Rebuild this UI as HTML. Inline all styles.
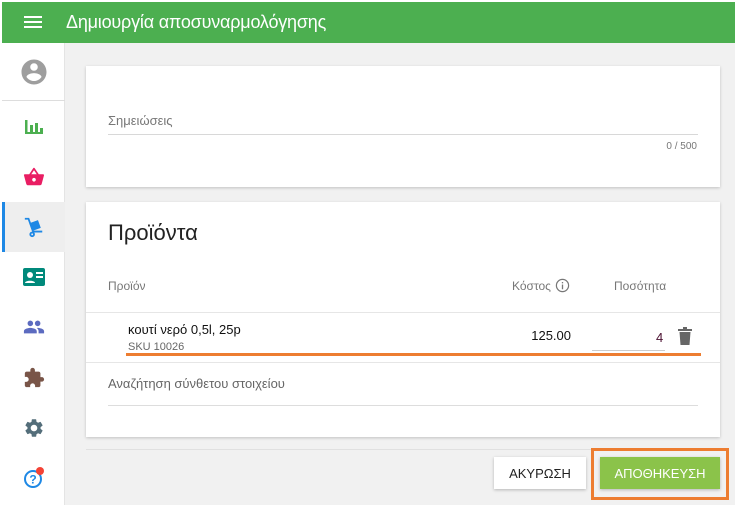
<!DOCTYPE html>
<html><head><meta charset="utf-8"><style>
*{box-sizing:border-box;margin:0;padding:0}
body{width:735px;height:505px;background:#fff;font-family:"Liberation Sans",sans-serif;position:relative;overflow:hidden}
.hdr{position:absolute;left:2px;top:2px;width:733px;height:41px;background:#4caf50;color:#fff}
.hdr .t{position:absolute;left:64px;top:10px;font-size:18px;letter-spacing:-0.2px}
.main{position:absolute;left:65px;top:43px;width:670px;height:462px;background:#f1f1f1}
.side{position:absolute;left:2px;top:43px;width:63px;height:462px;background:#fff;border-right:1px solid #e4e4e4}
.it{position:absolute;left:0;width:63px;height:50px;display:flex;align-items:center;justify-content:center}
.card{position:absolute;background:#fff;box-shadow:0 1px 3px rgba(0,0,0,.2)}
.abs{position:absolute}
</style></head><body>
<div class="hdr">
<svg class="abs" style="left:22px;top:13px" width="18" height="14"><rect y="1" width="18" height="2" fill="#fff"/><rect y="6" width="18" height="2" fill="#fff"/><rect y="11" width="18" height="2" fill="#fff"/></svg>
<div class="t">Δημιουργία αποσυναρμολόγησης</div></div>
<div class="main"></div>
<div class="side">
<div class="it" style="top:4px;height:50px"><svg width="30" height="30" viewBox="0 0 24 24"><path fill="#9e9e9e" d="M12 2C6.48 2 2 6.48 2 12s4.48 10 10 10 10-4.48 10-10S17.52 2 12 2zm0 3c1.66 0 3 1.34 3 3s-1.34 3-3 3-3-1.34-3-3 1.34-3 3-3zm0 14.2c-2.5 0-4.71-1.28-6-3.22.03-1.99 4-3.08 6-3.08 1.99 0 5.97 1.09 6 3.08-1.29 1.94-3.5 3.22-6 3.22z"/></svg></div>
<div class="abs" style="left:0;top:57px;width:63px;height:1px;background:#ddd"></div>
<div class="it" style="top:59px"><svg width="20" height="20" viewBox="0 0 20 20" fill="#4caf50"><rect x="1" y="3" width="2.5" height="14"/><rect x="1" y="15" width="18" height="2"/><rect x="6" y="8" width="3" height="9"/><rect x="11" y="6" width="3" height="11"/><rect x="16" y="11" width="3" height="6"/></svg></div>
<div class="it" style="top:109px"><svg width="22" height="22" viewBox="0 0 24 24"><path fill="#e91e63" d="M17.2 9l-4.4-6.6c-.4-.6-1.3-.6-1.7 0L6.8 9H2c-.6 0-1 .4-1 1l.1.3 2.5 9.3c.2.8 1 1.4 1.9 1.4h13c.9 0 1.7-.6 1.9-1.5l2.5-9.3V10c0-.6-.4-1-1-1h-4.7zM9 9l3-4.4L15 9H9zm3 8c-1.1 0-2-.9-2-2s.9-2 2-2 2 .9 2 2-.9 2-2 2z"/></svg></div>
<div class="it" style="top:159px;background:#eee"><div class="abs" style="left:0;top:0;width:3px;height:50px;background:#1e88e5"></div><svg width="22" height="22" viewBox="0 0 24 24" fill="none" stroke="#1e88e5" stroke-width="2"><path d="M2 3h4l5 14h10"/><circle cx="10" cy="20" r="2"/><rect x="9" y="7" width="8" height="7" fill="#1e88e5" transform="rotate(-20 13 10)"/></svg></div>
<div class="it" style="top:209px"><svg width="24" height="20" viewBox="0 0 24 20"><rect x="1" y="1" width="22" height="18" rx="2" fill="#00897b"/><circle cx="8" cy="8" r="3" fill="#fff"/><path d="M3 16c0-3 10-3 10 0z" fill="#fff"/><rect x="14" y="5" width="7" height="2" fill="#fff"/><rect x="14" y="9" width="7" height="2" fill="#fff"/></svg></div>
<div class="it" style="top:259px"><svg width="22" height="22" viewBox="0 0 24 24"><path fill="#5c6bc0" d="M16 11c1.66 0 3-1.34 3-3s-1.34-3-3-3-3 1.34-3 3 1.34 3 3 3zm-8 0c1.66 0 3-1.34 3-3S9.66 5 8 5 5 6.34 5 8s1.34 3 3 3zm0 2c-2.33 0-7 1.17-7 3.5V19h14v-2.5c0-2.33-4.67-3.5-7-3.5zm8 0c-.29 0-.62.02-.97.05 1.16.84 1.970 1.97 1.97 3.45V19h6v-2.5c0-2.33-4.67-3.5-7-3.5z"/></svg></div>
<div class="it" style="top:310px"><svg width="22" height="22" viewBox="0 0 24 24"><path fill="#795548" d="M20.5 11H19V7c0-1.1-.9-2-2-2h-4V3.5C13 2.12 11.88 1 10.5 1S8 2.12 8 3.5V5H4c-1.1 0-1.99.9-1.99 2v3.8H3.5c1.49 0 2.7 1.21 2.7 2.7s-1.21 2.7-2.7 2.7H2V20c0 1.1.9 2 2 2h3.8v-1.5c0-1.49 1.21-2.7 2.7-2.7 1.49 0 2.7 1.21 2.7 2.7V22H17c1.1 0 2-.9 2-2v-4h1.5c1.38 0 2.5-1.12 2.5-2.5S21.88 11 20.5 11z"/></svg></div>
<div class="it" style="top:360px"><svg width="22" height="22" viewBox="0 0 24 24"><path fill="#546e7a" d="M19.14 12.94c.04-.3.06-.61.06-.94 0-.32-.02-.64-.07-.94l2.030-1.58a.49.49 0 00.12-.61l-1.92-3.32a.488.488 0 00-.59-.22l-2.39.96c-.5-.38-1.03-.7-1.62-.94l-.36-2.54a.484.484 0 00-.48-.41h-3.84c-.24 0-.43.17-.47.41l-.36 2.54c-.59.24-1.13.57-1.62.94l-2.39-.96c-.22-.08-.47 0-.59.22L2.74 8.87c-.12.21-.08.47.12.61l2.03 1.58c-.05.3-.09.63-.09.94s.02.64.07.94l-2.03 1.58a.49.49 0 00-.12.61l1.92 3.32c.12.22.37.29.59.22l2.39-.96c.5.38 1.030.7 1.62.94l.36 2.54c.05.24.24.41.48.41h3.84c.24 0 .44-.17.47-.41l.36-2.54c.59-.24 1.13-.56 1.62-.94l2.39.96c.22.08.47 0 .59-.22l1.92-3.32c.12-.22.07-.47-.12-.61l-2.01-1.58zM12 15.6c-1.98 0-3.6-1.62-3.6-3.6s1.62-3.6 3.6-3.6 3.6 1.62 3.6 3.6-1.62 3.6-3.6 3.6z"/></svg></div>
<div class="it" style="top:410px"><svg width="24" height="24" viewBox="0 0 24 24"><circle cx="11" cy="13" r="8" fill="none" stroke="#1e88e5" stroke-width="2"/><text x="11" y="17.5" font-size="12" font-weight="bold" fill="#1e88e5" text-anchor="middle" font-family="Liberation Sans">?</text><circle cx="18" cy="5" r="4" fill="#f44336"/></svg></div>
</div>

<div class="card" style="left:86px;top:66px;width:634px;height:121px">
<div class="abs" style="left:22px;top:47px;font-size:13px;color:#777">Σημειώσεις</div>
<div class="abs" style="left:22px;top:68px;width:590px;height:1px;background:#d8d8d8"></div>
<div class="abs" style="right:23px;top:75px;font-size:10px;color:#777">0 / 500</div>
</div>

<div class="card" style="left:86px;top:202px;width:634px;height:235px">
<div class="abs" style="left:22px;top:18px;font-size:22px;color:#222">Προϊόντα</div>
<div class="abs" style="left:22px;top:77px;font-size:12px;color:#777">Προϊόν</div>
<div class="abs" style="left:426px;top:77px;font-size:12px;color:#777">Κόστος</div>
<svg class="abs" style="left:469px;top:76px" width="15" height="15" viewBox="0 0 16 16"><circle cx="8" cy="8" r="6.5" fill="none" stroke="#777" stroke-width="1.3"/><rect x="7.3" y="7" width="1.4" height="5" fill="#777"/><rect x="7.3" y="4.3" width="1.4" height="1.4" fill="#777"/></svg>
<div class="abs" style="left:528px;top:77px;font-size:12px;color:#777">Ποσότητα</div>
<div class="abs" style="left:0;top:110px;width:634px;height:1px;background:#e6e6e6"></div>
<div class="abs" style="left:42px;top:120px;font-size:13px;color:#111">κουτί νερό 0,5l, 25p</div>
<div class="abs" style="left:42px;top:139px;font-size:11px;color:#666">SKU 10026</div>
<div class="abs" style="right:149px;top:126px;font-size:13px;color:#111">125.00</div>
<div class="abs" style="left:570px;top:128px;font-size:13px;color:#4a1030">4</div>
<div class="abs" style="left:506px;top:148px;width:73px;height:1px;background:#ccc"></div>
<svg class="abs" style="left:592px;top:125px" width="14" height="18" viewBox="0 0 14 18"><rect x="0" y="2" width="14" height="2" fill="#666"/><rect x="5" y="0" width="4" height="2" fill="#666"/><path d="M1.5 5h11l-1 13h-9z" fill="#666"/></svg>
<div class="abs" style="left:40px;top:151px;width:575px;height:3px;background:#ed7d31"></div>
<div class="abs" style="left:0;top:160px;width:634px;height:1px;background:#e6e6e6"></div>
<div class="abs" style="left:22px;top:174px;font-size:13px;color:#666">Αναζήτηση σύνθετου στοιχείου</div>
<div class="abs" style="left:22px;top:203px;width:590px;height:1px;background:#ddd"></div>
</div>
<div class="abs" style="left:86px;top:449px;width:634px;height:1px;background:#e0e0e0"></div>
<div class="abs" style="left:494px;top:457px;width:92px;height:32px;background:#fff;box-shadow:0 1px 3px rgba(0,0,0,.25);font-size:13px;color:#222;display:flex;align-items:center;justify-content:center">ΑΚΥΡΩΣΗ</div>
<div class="abs" style="left:591px;top:448px;width:138px;height:52px;border:3px solid #ed7d31"></div>
<div class="abs" style="left:600px;top:457px;width:120px;height:32px;background:#8bc34a;box-shadow:0 1px 3px rgba(0,0,0,.25);font-size:13px;color:#fff;display:flex;align-items:center;justify-content:center">ΑΠΟΘΗΚΕΥΣΗ</div>
</body></html>
